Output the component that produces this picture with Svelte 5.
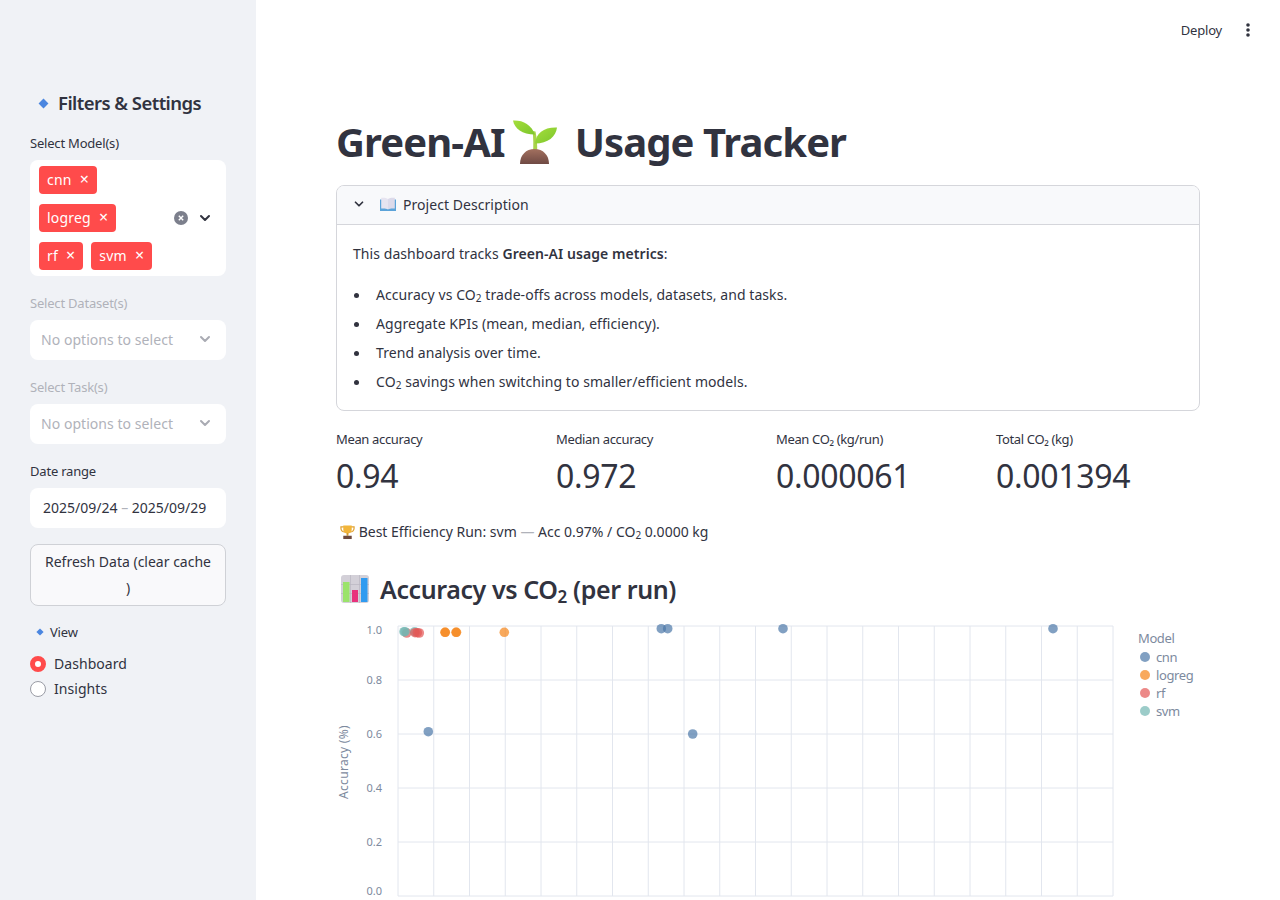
<script>
  const gridX = Array.from({ length: 21 }, (_, i) => 62 + i * 35.75);
  const gridY = [6, 60, 114, 168, 222, 276];
  const yTicks = [
    { label: '1.0', y: 14 },
    { label: '0.8', y: 64 },
    { label: '0.6', y: 118 },
    { label: '0.4', y: 172 },
    { label: '0.2', y: 226 },
    { label: '0.0', y: 275 }
  ];
  const points = [
    { x: 92.3, y: 111.7, c: '#4c78a8' },
    { x: 325.3, y: 8.7, c: '#4c78a8' },
    { x: 331.7, y: 8.7, c: '#4c78a8' },
    { x: 356.7, y: 114, c: '#4c78a8' },
    { x: 447, y: 8.7, c: '#4c78a8' },
    { x: 717, y: 8.7, c: '#4c78a8' },
    { x: 109, y: 12.3, c: '#f58518' },
    { x: 109.3, y: 12.3, c: '#f58518' },
    { x: 120, y: 12.3, c: '#f58518' },
    { x: 120.5, y: 12.3, c: '#f58518' },
    { x: 168.3, y: 12.3, c: '#f58518' },
    { x: 70.7, y: 13, c: '#e45756' },
    { x: 68, y: 11.7, c: '#72b7b2' },
    { x: 69, y: 11.7, c: '#72b7b2' },
    { x: 78.7, y: 11.7, c: '#72b7b2' },
    { x: 79, y: 12.7, c: '#e45756' },
    { x: 81.3, y: 12.7, c: '#e45756' },
    { x: 83.3, y: 13, c: '#e45756' }
  ];
  const legend = [
    { label: 'cnn', c: '#4c78a8' },
    { label: 'logreg', c: '#f58518' },
    { label: 'rf', c: '#e45756' },
    { label: 'svm', c: '#72b7b2' }
  ];
  const metrics = [
    { label: 'Mean accuracy', value: '0.94' },
    { label: 'Median accuracy', value: '0.972' },
    { label: 'Mean CO₂ (kg/run)', value: '0.000061' },
    { label: 'Total CO₂ (kg)', value: '0.001394' }
  ];
</script>

{#snippet chevron(cls)}
  <svg class={cls} viewBox="0 0 24 24" fill="none" stroke="currentColor" stroke-width="3" stroke-linecap="round" stroke-linejoin="round"><path d="M6 9l6 6 6-6"/></svg>
{/snippet}

{#snippet diamond(cls)}
  <svg class={cls} viewBox="0 0 12 12"><path d="M6 .6L11.4 6 6 11.4.6 6z" fill="#4a86e0"/></svg>
{/snippet}

<div class="page">
  <aside class="sidebar">
    <h2 class="side-title">{@render diamond('dia-lg')}<span>Filters &amp; Settings</span></h2>

    <div class="field">
      <div class="label">Select Model(s)</div>
      <div class="multi">
        <div class="tags">
          <div class="tag-row"><span class="tag">cnn<i>×</i></span></div>
          <div class="tag-row"><span class="tag">logreg<i>×</i></span></div>
          <div class="tag-row"><span class="tag">rf<i>×</i></span><span class="tag">svm<i>×</i></span></div>
        </div>
        <svg class="clear" viewBox="0 0 14 14"><circle cx="7" cy="7" r="7" fill="#7c7f8c"/><path d="M4.8 4.8l4.4 4.4M9.2 4.8L4.8 9.2" stroke="#fff" stroke-width="1.4"/></svg>
        {@render chevron('chev')}
      </div>
    </div>

    <div class="field off">
      <div class="label">Select Dataset(s)</div>
      <div class="select"><span>No options to select</span>{@render chevron('chev')}</div>
    </div>

    <div class="field off">
      <div class="label">Select Task(s)</div>
      <div class="select"><span>No options to select</span>{@render chevron('chev')}</div>
    </div>

    <div class="field">
      <div class="label">Date range</div>
      <div class="date">2025/09/24 <b>–</b> 2025/09/29</div>
    </div>

    <button class="refresh">Refresh Data (clear cache<br />)</button>

    <div class="view">{@render diamond('dia-sm')}<span>View</span></div>
    <div class="radio"><span class="dot on"></span>Dashboard</div>
    <div class="radio"><span class="dot"></span>Insights</div>
  </aside>

  <main class="main">
    <header class="topbar">
      <span class="deploy">Deploy</span>
      <svg class="kebab" viewBox="0 0 4 14"><circle cx="2" cy="2" r="1.8"/><circle cx="2" cy="7" r="1.8"/><circle cx="2" cy="12" r="1.8"/></svg>
    </header>

    <div class="content">
      <h1>
        Green-AI
        <svg class="sprout" viewBox="0 0 44 44">
          <defs>
            <linearGradient id="soil" x1="0" y1="0" x2="0" y2="1">
              <stop offset="0" stop-color="#a3705f" />
              <stop offset="1" stop-color="#6f4a44" />
            </linearGradient>
            <linearGradient id="leaf" x1="0" y1="0" x2="1" y2="1">
              <stop offset="0" stop-color="#a5de3c" />
              <stop offset="1" stop-color="#7cc62c" />
            </linearGradient>
          </defs>
          <path d="M20 33C20.500 26 20.500 18 19.500 11l3 .5c1.500 7 2 14 1.500 21.500z" fill="#a9d34a"/>
          <path d="M22 14.500C18 4.500 10 0 0 .5c1.500 8 9 14 22 14z" fill="url(#leaf)"/>
          <path d="M22 23.500C23 13 31 7 44 7.500c-1 9-9 16-22 16z" fill="url(#leaf)"/>
          <path d="M7 44c0-9 6-15 14.500-15S36 35 36 44z" fill="url(#soil)"/>
        </svg>
        <span class="after">Usage Tracker</span>
      </h1>

      <section class="expander">
        <div class="exp-head">
          {@render chevron('exp-chev')}
          <svg class="book" viewBox="0 0 16 14">
            <path d="M0 2.500h16V14H0z" fill="#5ba3d9"/>
            <path d="M1.200 .8C3.500.4 6.300.7 8 2v10.500c-1.700-1.100-4.500-1.300-6.800-.9z" fill="#e6e4f0"/>
            <path d="M14.800 .8C12.500.4 9.700.7 8 2v10.500c1.700-1.100 4.500-1.300 6.800-.9z" fill="#dcdaea"/>
          </svg>
          <span>Project Description</span>
        </div>
        <div class="exp-body">
          <p>This dashboard tracks <strong>Green-AI usage metrics</strong>:</p>
          <ul>
            <li>Accuracy vs CO<sub>2</sub> trade-offs across models, datasets, and tasks.</li>
            <li>Aggregate KPIs (mean, median, efficiency).</li>
            <li>Trend analysis over time.</li>
            <li>CO<sub>2</sub> savings when switching to smaller/efficient models.</li>
          </ul>
        </div>
      </section>

      <div class="metrics">
        {#each metrics as m}
          <div class="metric">
            <div class="m-label">{m.label}</div>
            <div class="m-value">{m.value}</div>
          </div>
        {/each}
      </div>

      <p class="best">
        <svg class="trophy" viewBox="0 0 16 16">
          <path d="M1 2.500h14v1.500c0 2.500-2 4-4 4H5C3 8 1 6.500 1 4z" fill="none" stroke="#e0a030" stroke-width="1.300"/>
          <path d="M3.500 1h9v4.500c0 2.500-2 4-4.500 4s-4.500-1.500-4.500-4z" fill="#f2b53a"/>
          <rect x="7" y="9" width="2" height="3" fill="#d59a2c"/>
          <rect x="3.500" y="12" width="9" height="3.500" fill="#6e4a3e"/>
        </svg>
        Best Efficiency Run: svm <span class="dash">—</span> Acc 0.97% / CO<sub>2</sub> 0.0000 kg
      </p>

      <h3>
        <svg class="bars" viewBox="0 0 28 28">
          <rect width="28" height="28" rx="3" fill="#d3d0d8"/>
          <path d="M0 9.500h28M0 18.500h28M9.500 0v28M18.500 0v28" stroke="#b9b6c2" stroke-width=".7"/>
          <rect x="2" y="7" width="6.500" height="20" fill="#9be36b"/>
          <rect x="11" y="15" width="6" height="12" fill="#e8327c"/>
          <rect x="20" y="3" width="6.500" height="24" fill="#2f9bf0"/>
        </svg>
        <span>Accuracy vs CO<sub>2</sub> (per run)</span>
      </h3>

      <div class="chart">
        <svg class="plot" viewBox="0 0 864 276" width="864" height="276">
          {#each gridX as x}
            <line x1={x} x2={x} y1="6" y2="276" stroke="#e2e6ee" />
          {/each}
          {#each gridY as y}
            <line x1="62" x2="777" y1={y} y2={y} stroke="#e2e6ee" />
          {/each}
          {#each yTicks as t}
            <text class="tick" x="46" y={t.y} text-anchor="end">{t.label}</text>
          {/each}
          <text class="axis" transform="translate(12 142) rotate(-90)" text-anchor="middle">Accuracy (%)</text>
          {#each points as p}
            <circle cx={p.x} cy={p.y} r="4.800" fill={p.c} opacity="0.7" />
          {/each}
        </svg>
        <div class="legend">
          <div class="lg-title">Model</div>
          {#each legend as l}
            <div class="lg-row"><span class="lg-dot" style="background:{l.c}"></span>{l.label}</div>
          {/each}
        </div>
      </div>
    </div>
  </main>
</div>

<style>
  :global(body) {
    margin: 0;
    overflow: hidden;
  }
  .page {
    display: flex;
    height: 900px;
    overflow: hidden;
    font-family: "Noto Sans", "Open Sans", sans-serif;
    color: #31333f;
    font-size: 14px;
    background: #fff;
  }
  .sidebar {
    width: 256px;
    flex-shrink: 0;
    box-sizing: border-box;
    background: #f0f2f6;
    padding: 91px 30px 0;
  }
  .side-title {
    display: flex;
    align-items: center;
    gap: 9px;
    margin: 0 0 20px 8px;
    font-size: 18.500px;
    font-weight: 600;
    line-height: 24px;
    letter-spacing: -0.55px;
  }
  .dia-lg {
    width: 11px;
    height: 11px;
  }
  .dia-sm {
    width: 8px;
    height: 8px;
  }
  .field {
    margin-bottom: 19px;
  }
  .label {
    font-size: 13px;
    line-height: 16px;
    margin-bottom: 9px;
    letter-spacing: -0.2px;
  }
  .off .label {
    color: #b0b2ba;
  }
  .multi {
    display: flex;
    align-items: center;
    background: #fff;
    border-radius: 8px;
    height: 116px;
    padding: 0 13px 0 9px;
  }
  .tags {
    flex: 1;
    display: flex;
    flex-direction: column;
    gap: 10px;
  }
  .tag-row {
    display: flex;
    gap: 8px;
  }
  .tag {
    display: inline-flex;
    align-items: center;
    box-sizing: border-box;
    height: 28px;
    padding: 0 8px 2px;
    border-radius: 4px;
    background: #ff4b4b;
    color: #fff;
    font-size: 14px;
    letter-spacing: 0.2px;
  }
  .tag i {
    font-style: normal;
    font-size: 16px;
    margin-left: 8px;
  }
  .clear {
    width: 14px;
    height: 14px;
    margin-right: 9px;
  }
  .chev {
    width: 16px;
    height: 16px;
    color: #31333f;
  }
  .select {
    display: flex;
    align-items: center;
    justify-content: space-between;
    height: 40px;
    box-sizing: border-box;
    padding: 0 13px 2px 11px;
    background: #fff;
    border-radius: 8px;
    color: #b0b2ba;
    letter-spacing: 0.05px;
  }
  .select .chev {
    color: #a9abb3;
  }
  .date {
    height: 40px;
    line-height: 40px;
    padding-left: 13px;
    background: #fff;
    border-radius: 8px;
  }
  .date b {
    font-weight: 400;
    color: #b0b2ba;
  }
  .refresh {
    display: block;
    width: 100%;
    height: 62px;
    margin: -3px 0 0;
    padding: 0;
    font: inherit;
    line-height: 26px;
    color: #31333f;
    background: #f9f9fb;
    border: 1px solid #cfd1d6;
    border-radius: 8px;
  }
  .view {
    display: flex;
    align-items: center;
    gap: 6px;
    margin: 18px 0 11px 6px;
    font-size: 13px;
    line-height: 16px;
    letter-spacing: -0.2px;
  }
  .radio {
    display: flex;
    align-items: center;
    gap: 8px;
    height: 25px;
    letter-spacing: 0.05px;
  }
  .dot {
    width: 16px;
    height: 16px;
    box-sizing: border-box;
    border-radius: 50%;
    border: 1px solid #9a9ca5;
    background: #fff;
  }
  .dot.on {
    border: 5px solid #ff4b4b;
  }
  .main {
    flex: 1;
    min-width: 0;
    display: flex;
    flex-direction: column;
  }
  .topbar {
    display: flex;
    align-items: center;
    justify-content: flex-end;
    height: 60px;
    padding-right: 30px;
    gap: 24px;
  }
  .deploy {
    font-size: 13px;
    letter-spacing: -0.2px;
  }
  .kebab {
    width: 4px;
    height: 14px;
    fill: #31333f;
  }
  .content {
    padding: 55px 80px 0 80px;
  }
  h1 {
    margin: 0 0 16px;
    display: flex;
    align-items: center;
    font-size: 40px;
    font-weight: 700;
    line-height: 54px;
    letter-spacing: -0.9px;
    white-space: nowrap;
  }
  .sprout {
    width: 44px;
    height: 44px;
    margin: 0 18px 0 8px;
  }
  .expander {
    border: 1px solid #d5d6db;
    border-radius: 8px;
    overflow: hidden;
  }
  .exp-head {
    display: flex;
    align-items: center;
    box-sizing: border-box;
    height: 39px;
    padding: 0 0 2px 15px;
    background: #f8f9fb;
    border-bottom: 1px solid #d5d6db;
    letter-spacing: 0.05px;
  }
  .exp-chev {
    width: 14px;
    height: 14px;
    margin-right: 14px;
  }
  .book {
    width: 16px;
    height: 14px;
    margin-right: 7px;
  }
  .exp-body {
    padding: 17px 16px 11px;
    line-height: 24px;
    letter-spacing: 0.07px;
  }
  .exp-body p {
    margin: 0 0 17px;
  }
  .exp-body strong {
    font-weight: 600;
  }
  .exp-body ul {
    margin: 0;
    padding: 0 0 0 23px;
    list-style: none;
  }
  .exp-body li {
    height: 29px;
  }
  .exp-body li::before {
    content: "";
    display: inline-block;
    width: 5px;
    height: 5px;
    border-radius: 50%;
    background: #31333f;
    margin: 0 17px 2px -22px;
    vertical-align: middle;
  }
  sub {
    font-size: 10px;
    line-height: 0;
    vertical-align: -2px;
  }
  .metrics {
    display: grid;
    grid-template-columns: repeat(4, 1fr);
    gap: 16px;
    margin-top: 18px;
  }
  .m-label {
    font-size: 13px;
    line-height: 20px;
    letter-spacing: -0.35px;
  }
  .m-value {
    margin-top: 5px;
    font-size: 32px;
    line-height: 44px;
    letter-spacing: -0.3px;
  }
  .best {
    margin: 22px 0 0;
    line-height: 24px;
    white-space: pre-wrap;
  }
  .dash {
    color: #b0b2ba;
  }
  .trophy {
    width: 15px;
    height: 16px;
    margin-left: 4px;
    vertical-align: -3px;
  }
  h3 {
    margin: 28px 0 0;
    display: flex;
    align-items: center;
    gap: 11px;
    font-size: 25px;
    font-weight: 600;
    line-height: 34px;
    letter-spacing: -0.4px;
  }
  h3 sub {
    font-size: 17px;
    vertical-align: -4px;
  }
  .bars {
    width: 28px;
    height: 28px;
    margin-left: 5px;
  }
  .chart {
    position: relative;
    margin-top: 14px;
    height: 276px;
  }
  .plot {
    display: block;
    overflow: visible;
  }
  .tick {
    font-size: 11px;
    fill: #7d8a9e;
  }
  .axis {
    font-size: 12px;
    fill: #7d8a9e;
    letter-spacing: 0.3px;
  }
  .legend {
    position: absolute;
    left: 802px;
    top: 9px;
    color: #7d8a9e;
    font-size: 13px;
    letter-spacing: -0.4px;
  }
  .lg-title {
    height: 19px;
    line-height: 18px;
  }
  .lg-row {
    display: flex;
    align-items: center;
    height: 18px;
    gap: 6px;
    padding-left: 2px;
  }
  .lg-dot {
    width: 10px;
    height: 10px;
    border-radius: 50%;
    opacity: 0.7;
  }
</style>
